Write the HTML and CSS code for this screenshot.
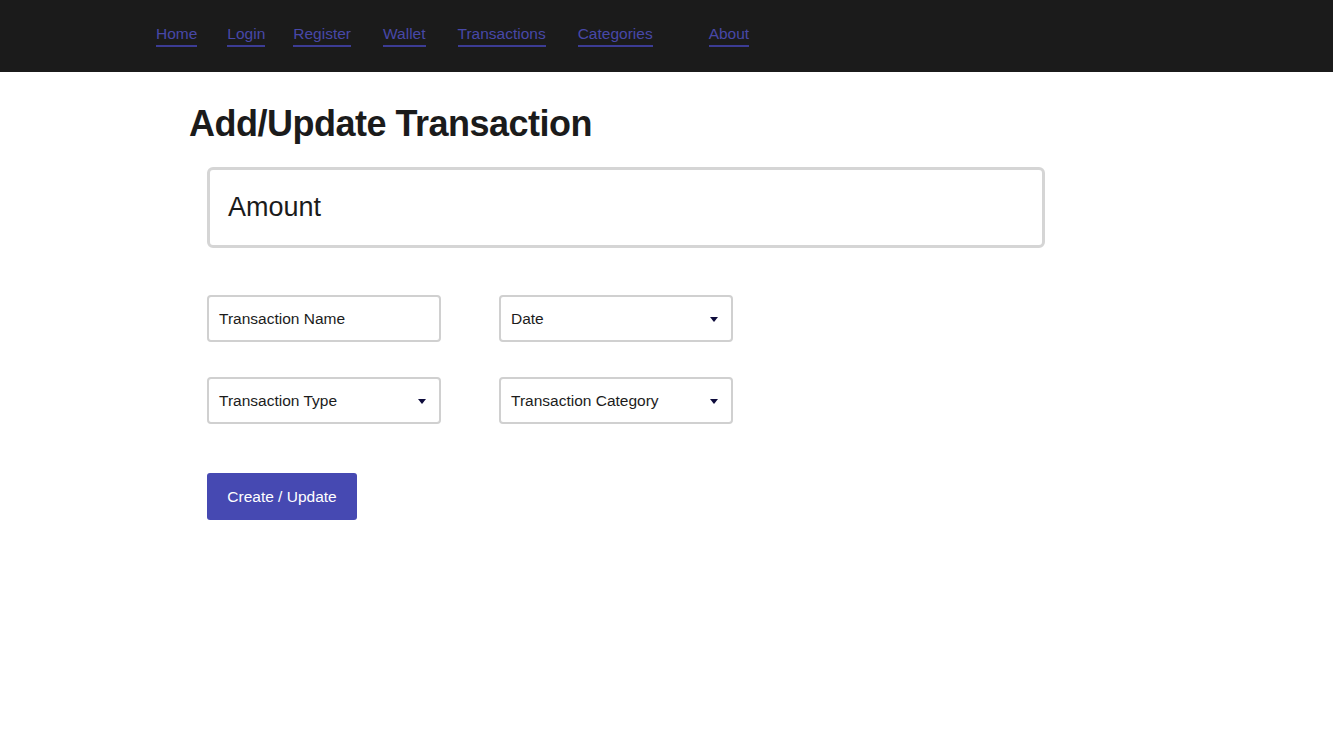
FILE: index.html
```html
<!DOCTYPE html>
<html lang="en">
<head>
<meta charset="utf-8">
<title>Add/Update Transaction</title>
<link rel="stylesheet" href="styles.css">
</head>
<body>
<nav class="topnav">
  <a class="nav-link" href="#">Home</a>
  <a class="nav-link" href="#">Login</a>
  <a class="nav-link nav-link--tight" href="#">Register</a>
  <a class="nav-link nav-link--loose" href="#">Wallet</a>
  <a class="nav-link nav-link--loose" href="#">Transactions</a>
  <a class="nav-link nav-link--loose" href="#">Categories</a>
  <a class="nav-link nav-link--about" href="#">About</a>
</nav>
<main class="page">
  <h1 class="page-title">Add/Update Transaction</h1>
  <form class="tx-form">
    <div class="amount-box"><span class="amount-label">Amount</span></div>
    <div class="field-grid">
      <div class="field"><span class="field-text">Transaction Name</span></div>
      <div class="field field--select"><span class="field-text">Date</span><span class="caret"></span></div>
      <div class="field field--select"><span class="field-text">Transaction Type</span><span class="caret"></span></div>
      <div class="field field--select"><span class="field-text">Transaction Category</span><span class="caret"></span></div>
    </div>
    <button type="button" class="submit-btn">Create / Update</button>
  </form>
</main>
</body>
</html>
```
FILE: styles.css
```css
* { box-sizing: border-box; }
html, body { margin: 0; padding: 0; background: #ffffff; }
body {
  font-family: "Liberation Sans", Arial, sans-serif;
  color: #1b1b1b;
}
.topnav {
  height: 72px;
  background: #1b1b1b;
  display: flex;
  align-items: flex-start;
  gap: 30px;
  padding: 25px 0 0 156px;
}
.nav-link {
  font-size: 15.5px;
  line-height: 18px;
  color: #4848a8;
  text-decoration: none;
  padding-bottom: 2px;
  border-bottom: 2px solid #3c3c94;
}
.nav-link--tight { margin-left: -2px; }
.nav-link--loose { margin-left: 2px; }
.nav-link--about { margin-left: 26px; }

.page {
  padding: 0 0 0 189px;
}
.page-title {
  margin: 29px 0 21px 0;
  font-size: 36px;
  line-height: 45px;
  font-weight: 700;
  letter-spacing: -0.5px;
  color: #1b1b1b;
}
.tx-form {
  margin-left: 18px;
  display: flex;
  flex-direction: column;
  align-items: flex-start;
}
.amount-box {
  width: 838px;
  height: 81px;
  border: 3px solid #d5d5d5;
  border-radius: 6px;
  display: flex;
  align-items: center;
  padding-left: 18px;
}
.amount-label {
  font-size: 27px;
  line-height: 31px;
  color: #1b1b1b;
}
.field-grid {
  margin-top: 47px;
  display: grid;
  grid-template-columns: 234px 234px;
  column-gap: 58px;
  row-gap: 35px;
}
.field {
  height: 47px;
  border: 2px solid #d0d0d0;
  border-radius: 4px;
  display: flex;
  align-items: center;
  justify-content: space-between;
  padding: 0 13px 0 10px;
}
.field-text {
  font-size: 15.5px;
  line-height: 18px;
  color: #1c1c1c;
}
.caret {
  width: 0;
  height: 0;
  border-left: 4.5px solid transparent;
  border-right: 4.5px solid transparent;
  border-top: 5px solid #0e0c3c;
  margin-top: 1px;
}
.submit-btn {
  margin-top: 49px;
  height: 47px;
  width: 150px;
  border: none;
  border-radius: 3px;
  background: #4649b2;
  color: #ffffff;
  font-family: "Liberation Sans", Arial, sans-serif;
  font-size: 15.5px;
  padding: 0;
  cursor: pointer;
}
```
